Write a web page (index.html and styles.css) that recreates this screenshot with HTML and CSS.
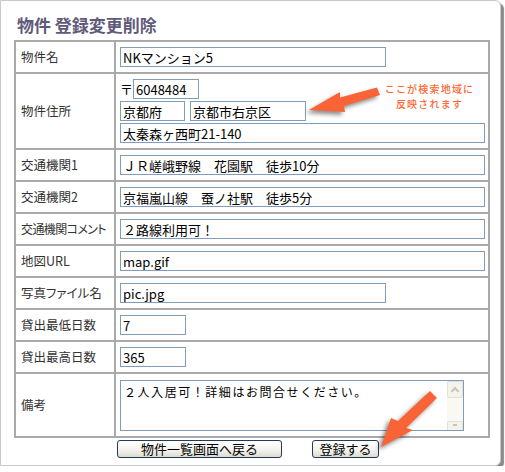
FILE: index.html
```html
<!DOCTYPE html>
<html lang="ja">
<head>
<meta charset="utf-8">
<title>物件 登録変更削除</title>
<link rel="stylesheet" href="styles.css">
</head>
<body>
<div class="frame">
  <h1 class="title">物件 登録変更削除</h1>
  <form class="form">
    <div class="grid">
      <div class="lbl">物件名</div>
      <div class="val"><input class="field w-md" value="NKマンション5"></div>

      <div class="lbl">物件住所</div>
      <div class="val addr">
        <div class="line"><span class="zip">〒</span><input class="field w-zip" value="6048484"></div>
        <div class="line"><input class="field w-pref" value="京都府"><input class="field w-city" value="京都市右京区"></div>
        <div class="line"><input class="field w-lg" value="太秦森ヶ西町21-140"></div>
      </div>

      <div class="lbl">交通機関1</div>
      <div class="val"><input class="field w-lg" value="ＪＲ嵯峨野線　花園駅　徒歩10分"></div>

      <div class="lbl">交通機関2</div>
      <div class="val"><input class="field w-lg" value="京福嵐山線　蚕ノ社駅　徒歩5分"></div>

      <div class="lbl lbl-tight">交通機関コメント</div>
      <div class="val"><input class="field w-lg" value="２路線利用可！"></div>

      <div class="lbl">地図URL</div>
      <div class="val"><input class="field w-lg" value="map.gif"></div>

      <div class="lbl">写真ファイル名</div>
      <div class="val"><input class="field w-md" value="pic.jpg"></div>

      <div class="lbl">貸出最低日数</div>
      <div class="val"><input class="field w-sm" value="7"></div>

      <div class="lbl">貸出最高日数</div>
      <div class="val"><input class="field w-sm" value="365"></div>

      <div class="lbl">備考</div>
      <div class="val">
        <div class="memo">
          <textarea class="memo-text">２人入居可！詳細はお問合せください。</textarea>
          <div class="sb">
            <div class="sb-up"><span class="chev"></span></div>
            <div class="sb-track"></div>
            <div class="sb-down"><span class="dot"></span></div>
          </div>
        </div>
      </div>
    </div>
    <div class="actions">
      <button type="button" class="btn btn-back">物件一覧画面へ戻る</button>
      <button type="button" class="btn btn-save">登録する</button>
    </div>
  </form>

  <div class="note">ここが検索地域に<br>反映されます</div>
  <svg class="arrows" width="505" height="472" viewBox="0 0 505 472" xmlns="http://www.w3.org/2000/svg">
    <polygon fill="#fa6335" points="309,110 340,92 340,97.5 377,87.5 380,95 344,106 345,112"/>
    <polygon fill="#fa6335" points="381,447 391,418 398,421 430,391 437,398 406,428 413,430"/>
  </svg>
</div>
</body>
</html>
```

FILE: styles.css
```css
* { box-sizing: border-box; }
html, body { margin: 0; padding: 0; background: #fff; }
body {
  font-family: "Noto Sans CJK JP", "Liberation Sans", sans-serif;
  font-size: 13px;
  color: #333;
}
.frame {
  position: relative;
  width: 501px;
  height: 466px;
  border: 1px solid #c9c9c9;
  border-radius: 0 6px 6px 0;
  box-shadow: 3px 3px 1px #8a8a8a;
  padding: 0 0 0 13px;
  background: #fff;
}
.title {
  margin: 0;
  height: 39px;
  padding: 14px 0 0 3px;
  font-size: 17px;
  line-height: 20px;
  font-weight: bold;
  color: #5f5a7a;
}
.grid {
  display: grid;
  width: 476px;
  grid-template-columns: 98px 372px;
  grid-template-rows: 30px 74px 30px 30px 30px 30px 30px 30px 30px 62px;
  gap: 2px;
  padding: 2px;
  background: #a9a9a9;
}
.lbl {
  background: #fff;
  display: flex;
  align-items: center;
  padding-left: 5px;
  white-space: nowrap;
  font-size: 12.5px;
  font-feature-settings: "palt";
  color: #333;
  line-height: 16px;
  overflow: hidden;
}
.lbl-tight { letter-spacing: -0.6px; font-size: 12px; }
.val {
  background: #fff;
  display: flex;
  align-items: center;
  padding-left: 4px;
}
.addr {
  flex-direction: column;
  align-items: flex-start;
  justify-content: flex-start;
  padding-top: 5px;
  gap: 2px;
}
.line { display: flex; align-items: center; gap: 5px; }
.zip { width: 8px; color: #000; line-height: 16px; }
.field {
  height: 20px;
  margin: 0;
  border: 1px solid #7f9db9;
  padding: 0 2px;
  font-family: "Noto Sans CJK JP", "Liberation Sans", sans-serif;
  font-size: 13px;
  line-height: 18px;
  color: #000;
  background: #fff;
  outline: none;
  border-radius: 0;
}
.w-md { width: 266px; }
.w-lg { width: 365px; }
.w-sm { width: 66px; }
.w-zip { width: 66px; }
.w-pref { width: 65px; }
.w-city { width: 116px; }

.memo { position: relative; width: 344px; height: 51px; }
.memo-text {
  display: block;
  width: 344px;
  height: 51px;
  margin: 0;
  border: 1px solid #7f9db9;
  padding: 3px 18px 0 3px;
  font-family: "Noto Sans CJK JP", sans-serif;
  font-size: 12px;
  line-height: 16px;
  letter-spacing: 1.55px;
  color: #000;
  resize: none;
  overflow: hidden;
  outline: none;
}
.sb {
  position: absolute;
  top: 1px;
  right: 1px;
  bottom: 1px;
  width: 16px;
  background: #f9f8f2;
  display: flex;
  flex-direction: column;
}
.sb-up {
  height: 17px;
  border: 1px solid #e4e1d2;
  border-radius: 2px;
  background: #f4f3ec;
  display: flex;
  align-items: center;
  justify-content: center;
}
.chev {
  width: 6px;
  height: 6px;
  border-left: 2px solid #c9c6b8;
  border-top: 2px solid #c9c6b8;
  transform: translateY(2px) rotate(45deg);
}
.sb-track { flex: 1; }
.sb-down {
  height: 9px;
  border: 1px solid #e4e1d2;
  border-bottom: 0;
  border-radius: 2px 2px 0 0;
  background: #f4f3ec;
  display: flex;
  justify-content: center;
  padding-top: 2px;
}
.dot { width: 4px; height: 2px; background: #c9c6b8; }

.actions {
  display: flex;
  justify-content: center;
  gap: 30px;
  width: 476px;
  padding: 2px 8px 0 0;
}
.btn {
  height: 18px;
  margin: 0;
  padding: 0;
  border: 1px solid #1f3b60;
  border-radius: 3px;
  background: linear-gradient(#ffffff, #f4f3ee 55%, #dedbd0);
  font-family: "Noto Sans CJK JP", sans-serif;
  font-size: 13px;
  line-height: 16px;
  color: #000;
}
.btn-back { width: 165px; }
.btn-save { width: 67px; }

.note {
  position: absolute;
  left: 380px;
  top: 81px;
  width: 97px;
  text-align: center;
  font-size: 10px;
  line-height: 14.5px;
  letter-spacing: 1.2px;
  font-weight: 500;
  color: #ff6633;
}
.arrows {
  position: absolute;
  left: -1px;
  top: -1px;
  pointer-events: none;
  filter: drop-shadow(-3px 3px 2px rgba(0, 0, 0, 0.45));
}
```
